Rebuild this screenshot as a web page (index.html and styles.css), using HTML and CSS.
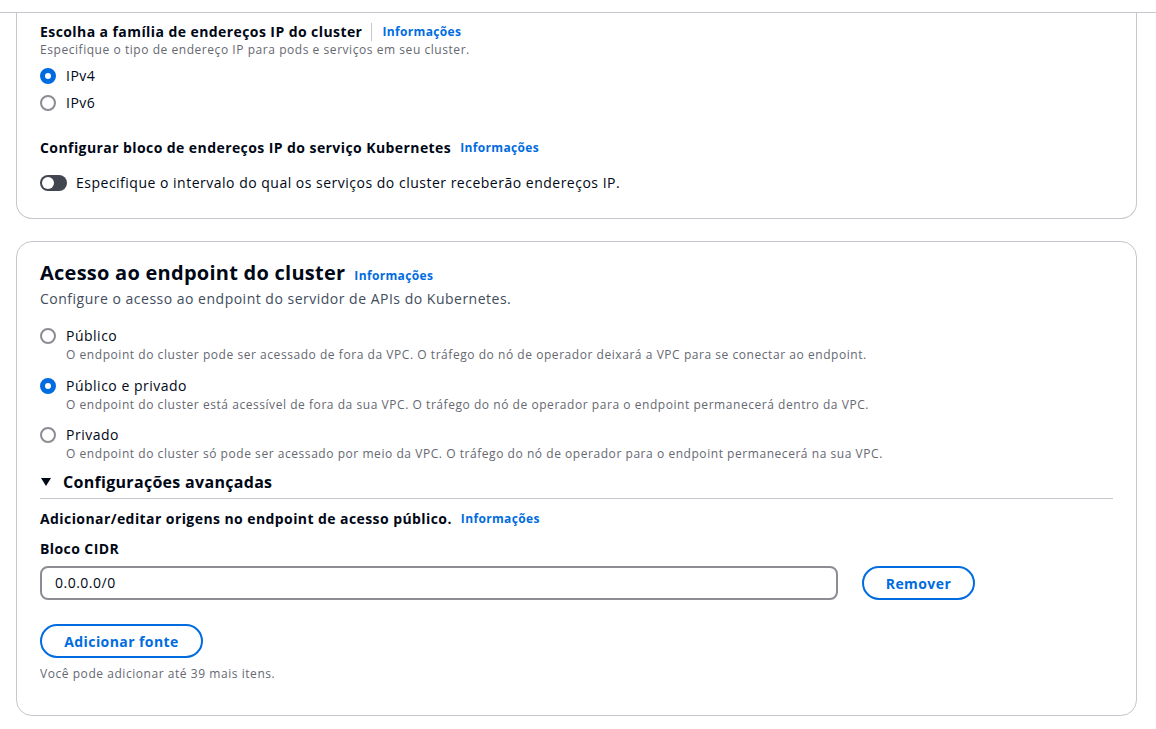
FILE: index.html
```html
<!DOCTYPE html>
<html lang="pt-BR">
<head>
<meta charset="utf-8">
<title>Acesso ao endpoint do cluster</title>
<link rel="stylesheet" href="styles.css">
</head>
<body>
<div class="topbar"></div>
<main class="page">
  <section class="card card-top">
    <div class="field">
      <div class="label-row">
        <span class="label">Escolha a família de endereços IP do cluster</span>
        <span class="sep"></span>
        <a class="info">Informações</a>
      </div>
      <div class="desc">Especifique o tipo de endereço IP para pods e serviços em seu cluster.</div>
      <div class="radios compact">
        <label class="radio"><span class="dot checked"></span><span class="rlabel">IPv4</span></label>
        <label class="radio"><span class="dot"></span><span class="rlabel">IPv6</span></label>
      </div>
    </div>
    <div class="field field-k8s">
      <div class="label-row">
        <span class="label">Configurar bloco de endereços IP do serviço Kubernetes</span>
        <a class="info info-gap">Informações</a>
      </div>
      <label class="toggle-row"><span class="toggle"><span class="knob"></span></span><span class="tlabel">Especifique o intervalo do qual os serviços do cluster receberão endereços IP.</span></label>
    </div>
  </section>

  <section class="card card-endpoint">
    <div class="head">
      <h2 class="title">Acesso ao endpoint do cluster</h2>
      <a class="info">Informações</a>
    </div>
    <div class="subtitle">Configure o acesso ao endpoint do servidor de APIs do Kubernetes.</div>
    <div class="radios spaced">
      <label class="radio"><span class="dot"></span><span class="rtext"><span class="rlabel">Público</span><span class="rdesc">O endpoint do cluster pode ser acessado de fora da VPC. O tráfego do nó de operador deixará a VPC para se conectar ao endpoint.</span></span></label>
      <label class="radio"><span class="dot checked"></span><span class="rtext"><span class="rlabel">Público e privado</span><span class="rdesc">O endpoint do cluster está acessível de fora da sua VPC. O tráfego do nó de operador para o endpoint permanecerá dentro da VPC.</span></span></label>
      <label class="radio"><span class="dot"></span><span class="rtext"><span class="rlabel">Privado</span><span class="rdesc">O endpoint do cluster só pode ser acessado por meio da VPC. O tráfego do nó de operador para o endpoint permanecerá na sua VPC.</span></span></label>
    </div>
    <div class="expander">
      <div class="exp-head"><span class="caret"></span><span class="exp-title">Configurações avançadas</span></div>
      <div class="exp-body">
        <div class="label-row">
          <span class="label">Adicionar/editar origens no endpoint de acesso público.</span>
          <a class="info info-gap">Informações</a>
        </div>
        <div class="label cidr-label">Bloco CIDR</div>
        <div class="cidr-row">
          <div class="input">0.0.0.0/0</div>
          <button class="btn">Remover</button>
        </div>
        <button class="btn btn-add">Adicionar fonte</button>
        <div class="desc limit">Você pode adicionar até 39 mais itens.</div>
      </div>
    </div>
  </section>
</main>
</body>
</html>
```
FILE: styles.css
```css
* { box-sizing: border-box; }
html, body { margin: 0; padding: 0; background: #ffffff; }
body {
  font-family: "Open Sans", "Noto Sans", "Liberation Sans", sans-serif;
  color: #000716;
  font-size: 14px;
  line-height: 20px;
  letter-spacing: 0.5px;
}
.topbar {
  height: 13px;
  border-bottom: 1px solid #c6c6cd;
}
.page {
  padding: 0 19px 0 16px;
  display: flex;
  flex-direction: column;
  gap: 22px;
}
.card {
  border: 1px solid #c6c6cd;
  border-radius: 16px;
  padding: 0 23px;
}
.card-top {
  border-top: none;
  border-top-left-radius: 0;
  border-top-right-radius: 0;
  padding-top: 9px;
  padding-bottom: 24px;
}
.label-row {
  display: flex;
  align-items: center;
}
.label {
  font-weight: 700;
  font-size: 14px;
  line-height: 20px;
  letter-spacing: 0.42px;
}
.sep {
  width: 1px;
  height: 18px;
  background: #c6c6cd;
  margin: 0 10px 0 9px;
}
.info {
  color: #006ce0;
  font-weight: 700;
  font-size: 12px;
  line-height: 16px;
  letter-spacing: 0.35px;
}
.info-gap { margin-left: 9px; }
.desc {
  font-size: 12px;
  line-height: 16px;
  color: #656871;
  letter-spacing: 0.55px;
}
.radios { display: flex; flex-direction: column; }
.radios.compact { margin-top: 7px; gap: 5px; }
.radio {
  display: flex;
  align-items: flex-start;
  gap: 10px;
}
.dot {
  flex: none;
  width: 16px;
  height: 16px;
  border-radius: 50%;
  border: 2px solid #8c8c94;
  margin-top: 3px;
  background: #fff;
}
.dot.checked {
  border: 5px solid #006ce0;
}
.rlabel { font-size: 14px; line-height: 22px; }
.field-k8s { margin-top: 24px; }
.toggle-row {
  display: flex;
  align-items: center;
  gap: 9px;
  margin-top: 14px;
  line-height: 22px;
}
.toggle {
  width: 27px;
  height: 16px;
  border-radius: 8px;
  background: #424650;
  display: flex;
  align-items: center;
  padding-left: 2px;
}
.knob {
  width: 12px;
  height: 12px;
  border-radius: 50%;
  background: #fff;
}
.tlabel { font-size: 14px; }
.card-endpoint {
  padding-top: 19px;
  padding-bottom: 33px;
}
.head { display: flex; align-items: baseline; gap: 9px; }
.title {
  margin: 0;
  font-size: 20px;
  line-height: 24px;
  font-weight: 700;
  letter-spacing: 0.25px;
}
.subtitle {
  font-size: 14px;
  line-height: 20px;
  color: #414d5c;
  margin-top: 4px;
}
.radios.spaced { margin-top: 16px; gap: 11.5px; }
.rtext { display: flex; flex-direction: column; }
.rdesc { font-size: 12px; line-height: 16px; color: #656871; letter-spacing: 0.55px; }
.expander { margin-top: 9px; }
.exp-head {
  display: flex;
  align-items: center;
  gap: 12px;
  padding-left: 1px;
  padding-bottom: 5px;
  border-bottom: 1px solid #c6c6cd;
}
.caret {
  width: 0; height: 0;
  border-left: 5px solid transparent;
  border-right: 5px solid transparent;
  border-top: 8px solid #000716;
}
.exp-title { font-size: 16px; line-height: 22px; font-weight: 700; letter-spacing: 0.3px; }
.exp-body { padding-top: 10px; }
.cidr-label { margin-top: 10px; }
.cidr-row {
  display: flex;
  align-items: center;
  gap: 24px;
  margin-top: 7px;
}
.input {
  width: 798px;
  height: 34px;
  border: 2px solid #8c8c94;
  border-radius: 8px;
  padding: 0 13px;
  display: flex;
  align-items: center;
  font-size: 14px;
}
.btn {
  font-family: inherit;
  background: #fff;
  border: 2px solid #006ce0;
  color: #006ce0;
  border-radius: 20px;
  font-weight: 700;
  font-size: 14px;
  letter-spacing: 0.42px;
  height: 34px;
  width: 113px;
  padding: 0;
}
.btn-add {
  display: block;
  width: 163px;
  margin-top: 24px;
}
.limit { margin-top: 8px; }
```
